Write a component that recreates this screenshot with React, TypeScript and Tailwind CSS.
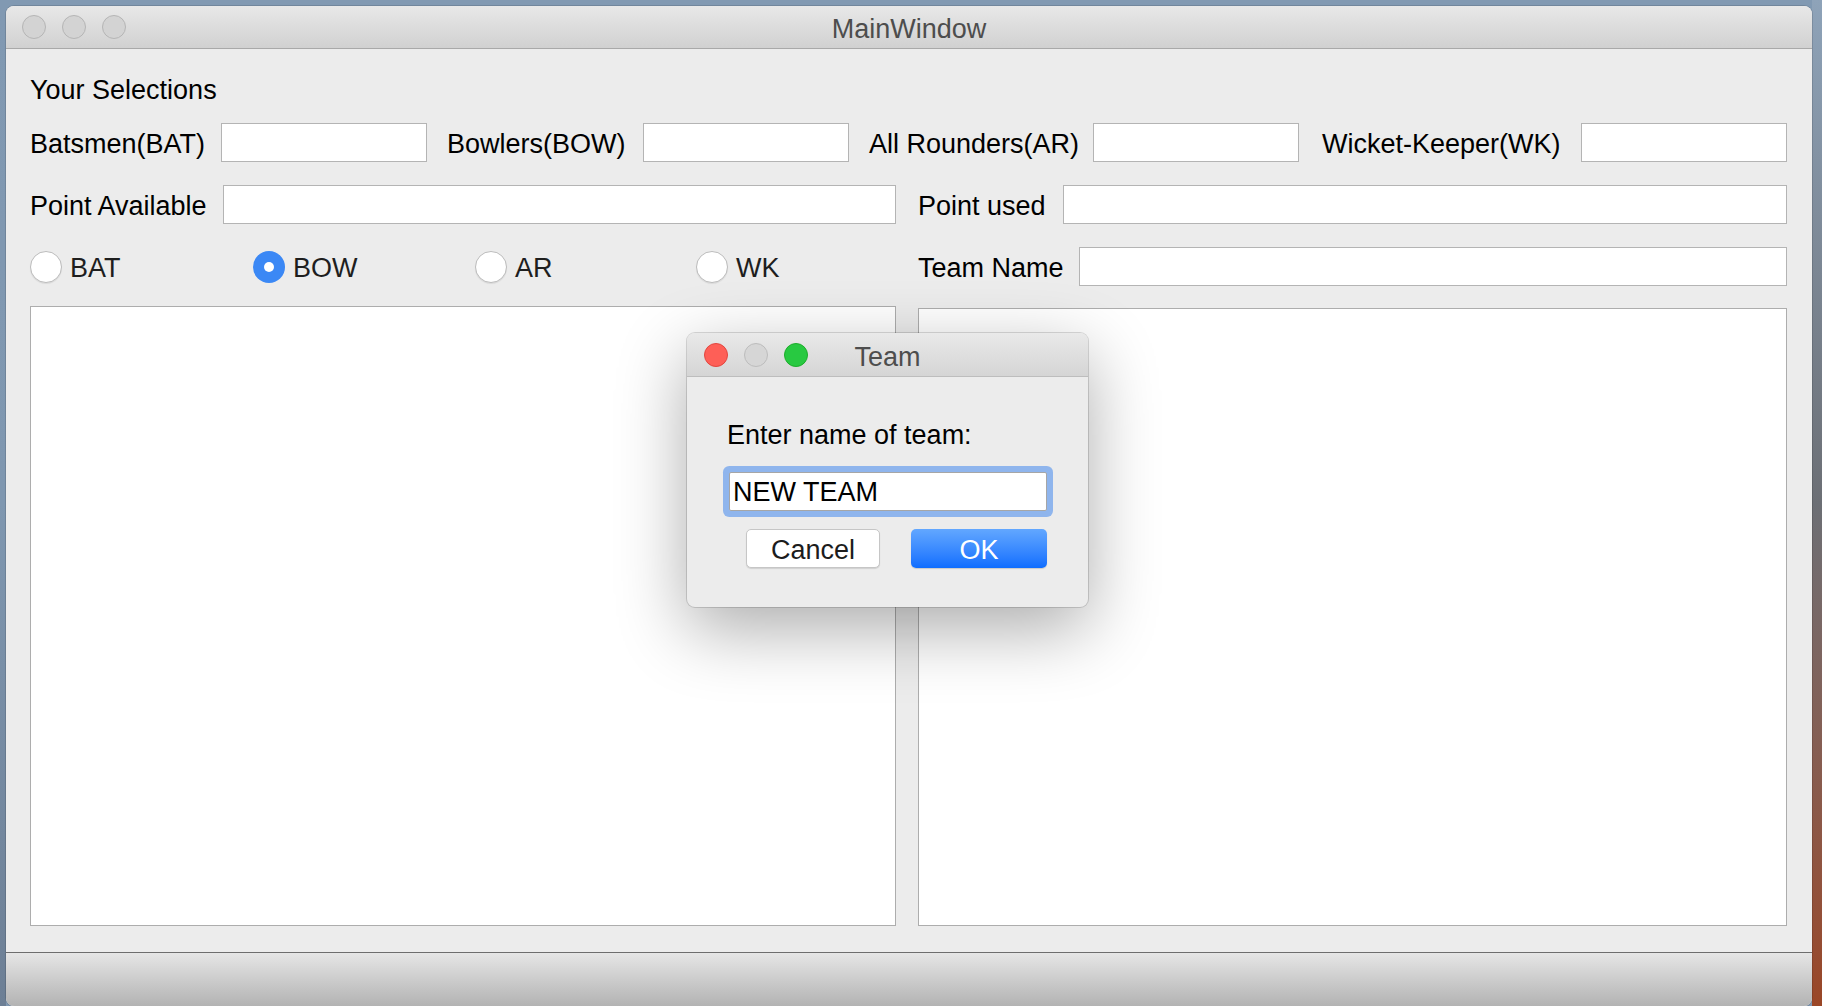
import clsx from "clsx";

const Field = ({ className }: { className?: string }) => (
  <div className={clsx("h-[39px] border border-[#b4b4b4] bg-white", className)} />
);

const Label = ({ children, className }: { children: string; className?: string }) => (
  <span className={clsx("shrink-0 pt-[3px]", className)}>{children}</span>
);

const Lights = ({ colors }: { colors: string[] }) => (
  <div className="flex items-center gap-[16px]">
    {colors.map((c, i) => (
      <span key={i} className={clsx("block h-[24px] w-[24px] rounded-full border", c)} />
    ))}
  </div>
);

const Radio = ({ label, checked, className }: { label: string; checked?: boolean; className?: string }) => (
  <div className={clsx("flex shrink-0 items-center", className)}>
    {checked ? (
      <span className="flex h-[32px] w-[32px] items-center justify-center rounded-full bg-[#3b88f5]">
        <span className="block h-[10px] w-[10px] rounded-full bg-white" />
      </span>
    ) : (
      <span className="block h-[32px] w-[32px] rounded-full border border-[#bcbcbc] bg-white shadow-[0_1px_1px_rgba(0,0,0,0.08)]" />
    )}
    <span className="ml-[8px] pt-[3px] text-[#1e1e1e]">{label}</span>
  </div>
);

const TeamDialog = () => (
  <div className="absolute left-[681px] top-[327px] flex h-[274px] w-[401px] flex-col overflow-hidden rounded-[8px] bg-[#ececec] shadow-[0_22px_70px_rgba(0,0,0,0.33),0_0_0_1px_rgba(0,0,0,0.14)]">
    <div className="grid h-[44px] grid-cols-[1fr_auto_1fr] items-center border-b border-[#bdbdbd] bg-linear-to-b from-[#e9e9e9] to-[#d5d5d5] px-[17px]">
      <Lights
        colors={[
          "bg-[#fe5f57] border-[#e2463f]",
          "bg-[#d6d6d6] border-[#bcbcbc]",
          "bg-[#28c941] border-[#1dad2b]",
        ]}
      />
      <span className="pt-[4px] text-[#4d4d4d]">Team</span>
      <span />
    </div>
    <div className="flex flex-col pl-[40px] pt-[43px]">
      <span className="text-black">Enter name of team:</span>
      <div className="ml-[2px] mt-[22px] flex h-[39px] w-[318px] items-center rounded-[2px] border border-[#a6a6a6] bg-white pl-[3px] pt-[1px] text-black ring-[6px] ring-[#8fb5ed]">
        NEW TEAM
      </div>
      <div className="ml-[19px] mt-[18px] flex gap-[31px]">
        <button className="flex h-[39px] w-[134px] items-center justify-center rounded-[5px] border border-[#c6c6c6] bg-white pt-[2px] text-[#1c1c1c] shadow-[0_1px_1px_rgba(0,0,0,0.12)]">
          Cancel
        </button>
        <button className="flex h-[39px] w-[136px] items-center justify-center rounded-[5px] bg-linear-to-b from-[#62a7ff] to-[#0d6dff] pt-[2px] text-white shadow-[0_1px_1px_rgba(0,0,0,0.15)]">
          OK
        </button>
      </div>
    </div>
  </div>
);

export default function App() {
  return (
    <div className="flex h-[1006px] w-[1822px] overflow-hidden bg-[#8199b2] font-['Liberation_Sans',Arial,sans-serif] text-[27px] leading-[30px]">
      <div className="w-[6px] bg-linear-to-b from-[#8199b2] via-[#7f97b0] to-[#6d7f95]" />
      <div className="w-[1806px] pt-[6px]">
        <div className="relative flex h-[1000px] flex-col overflow-hidden rounded-[8px] bg-[#ececec] shadow-[0_0_0_1px_rgba(0,0,0,0.12)]">
          {/* title bar */}
          <div className="grid h-[43px] shrink-0 grid-cols-[1fr_auto_1fr] items-center border-b border-[#a9a9a9] bg-linear-to-b from-[#e8e8e8] to-[#d1d1d1] px-[16px]">
            <Lights
              colors={[
                "bg-[#d3d3d3] border-[#b5b5b5]",
                "bg-[#d3d3d3] border-[#b5b5b5]",
                "bg-[#d3d3d3] border-[#b5b5b5]",
              ]}
            />
            <span className="pt-[4px] text-[#4d4d4d]">MainWindow</span>
            <span />
          </div>

          <div className="flex flex-1 flex-col pb-[26px] pl-[24px] pr-[25px] pt-[26px] text-black">
            <span>Your Selections</span>

            <div className="mt-[18px] flex h-[39px] items-center">
              <Label className="w-[191px]">Batsmen(BAT)</Label>
              <Field className="w-[206px] shrink-0" />
              <Label className="ml-[20px] w-[196px]">Bowlers(BOW)</Label>
              <Field className="w-[206px] shrink-0" />
              <Label className="ml-[20px] w-[224px]">All Rounders(AR)</Label>
              <Field className="w-[206px] shrink-0" />
              <Label className="ml-[23px] w-[259px]">Wicket-Keeper(WK)</Label>
              <Field className="w-[206px] shrink-0" />
            </div>

            <div className="mt-[23px] grid grid-cols-[866px_1fr] gap-x-[22px] gap-y-[23px]">
              <div className="flex h-[39px] items-center">
                <Label className="w-[193px]">Point Available</Label>
                <Field className="flex-1" />
              </div>
              <div className="flex h-[39px] items-center">
                <Label className="w-[145px]">Point used</Label>
                <Field className="flex-1" />
              </div>
              <div className="flex h-[39px] items-center">
                <Radio label="BAT" className="w-[223px]" />
                <Radio label="BOW" checked className="w-[222px]" />
                <Radio label="AR" className="w-[221px]" />
                <Radio label="WK" />
              </div>
              <div className="flex h-[39px] items-center">
                <Label className="w-[161px]">Team Name</Label>
                <Field className="flex-1" />
              </div>
            </div>

            <div className="mt-[20px] grid flex-1 grid-cols-[866px_1fr] gap-x-[22px]">
              <div className="border border-[#adadad] bg-white" />
              <div className="mt-[2px] border border-[#adadad] bg-white" />
            </div>
          </div>

          {/* status bar */}
          <div className="h-[54px] shrink-0 border-t border-[#6e6e6e] bg-linear-to-b from-[#e6e6e6] to-[#b3b3b3]" />

          <TeamDialog />
        </div>
      </div>
      <div className="w-[10px] bg-linear-to-b from-[#8ea3b9] via-[#6c6f75] to-[#9a4626]" />
    </div>
  );
}
